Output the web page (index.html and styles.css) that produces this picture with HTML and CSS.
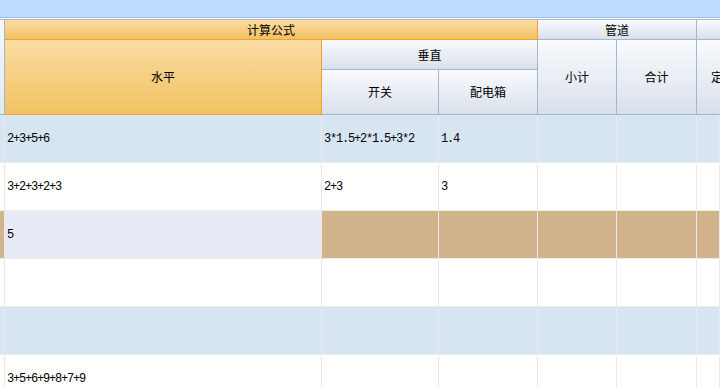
FILE: index.html
```html
<!DOCTYPE html>
<html lang="zh">
<head>
<meta charset="utf-8">
<title>计算公式</title>
<link rel="stylesheet" href="styles.css">
</head>
<body>
<div class="topbar"></div>
<div class="sheet">
  <div class="hd strip"></div>
  <div class="hd orange calc">计算公式</div>
  <div class="hd gray pipe">管道</div>
  <div class="hd gray extra"></div>
  <div class="hd orange horiz">水平</div>
  <div class="hd gray vert">垂直</div>
  <div class="hd gray sub">小计</div>
  <div class="hd gray tot">合计</div>
  <div class="hd gray quota">定额</div>
  <div class="hd gray sw">开关</div>
  <div class="hd gray box">配电箱</div>

  <div class="c s blue"></div><div class="c blue">2+3+5+6</div><div class="c blue">3*1.5+2*1.5+3*2</div><div class="c blue">1.4</div><div class="c blue"></div><div class="c blue"></div><div class="c blue"></div>
  <div class="c s"></div><div class="c">3+2+3+2+3</div><div class="c">2+3</div><div class="c">3</div><div class="c"></div><div class="c"></div><div class="c"></div>
  <div class="c s tan"></div><div class="c lav">5</div><div class="c tan"></div><div class="c tan"></div><div class="c tan"></div><div class="c tan"></div><div class="c tan"></div>
  <div class="c s"></div><div class="c"></div><div class="c"></div><div class="c"></div><div class="c"></div><div class="c"></div><div class="c"></div>
  <div class="c s blue"></div><div class="c blue"></div><div class="c blue"></div><div class="c blue"></div><div class="c blue"></div><div class="c blue"></div><div class="c blue"></div>
  <div class="c s"></div><div class="c">3+5+6+9+8+7+9</div><div class="c"></div><div class="c"></div><div class="c"></div><div class="c"></div><div class="c"></div>
</div>
</body>
</html>
```
FILE: styles.css
```css
html, body {
  margin: 0;
  padding: 0;
  background: #ffffff;
  overflow: hidden;
  width: 720px;
  height: 387px;
}
* { box-sizing: border-box; }

.topbar {
  height: 18px;
  background: #bfdbfd;
  border-bottom: 1px solid #9ebde3;
}

.sheet {
  margin-top: 1px;
  border-top: 1px solid #aab7c6;
  display: grid;
  grid-template-columns: 5px 317px 117px 99px 79px 80px 23px;
  grid-template-rows: 20px 30px 45px repeat(6, 48px);
  width: 720px;
  overflow: hidden;
  font-family: "Noto Sans CJK SC", "Liberation Sans", sans-serif;
  font-size: 12px;
  color: #000;
}

.hd {
  display: flex;
  align-items: center;
  justify-content: center;
  border-right: 1px solid #9fb8d3;
  border-bottom: 1px solid #9fb8d3;
  white-space: nowrap;
  overflow: hidden;
  line-height: 1;
}
.gray { background: linear-gradient(#f8fafd, #dae0eb); }
.orange {
  background: linear-gradient(#fadca3, #f2c262);
  border-color: #f2a034;
}
.strip {
  grid-column: 1;
  grid-row: 1 / 4;
  background: linear-gradient(#f6f9fd, #e3e9f2);
}
.calc { grid-column: 2 / 5; grid-row: 1; }
.pipe { grid-column: 5 / 7; grid-row: 1; }
.extra { grid-column: 7; grid-row: 1; border-right: 0; }
.horiz { grid-column: 2; grid-row: 2 / 4; }
.vert { grid-column: 3 / 5; grid-row: 2; }
.sub { grid-column: 5; grid-row: 2 / 4; }
.tot { grid-column: 6; grid-row: 2 / 4; }
.quota {
  grid-column: 7;
  grid-row: 2 / 4;
  justify-content: flex-start;
  padding-left: 14px;
  border-right: 0;
}
.sw { grid-column: 3; grid-row: 3; }
.box { grid-column: 4; grid-row: 3; }

.c {
  display: flex;
  align-items: center;
  padding-left: 2px;
  border-right: 1px solid #e9e9ea;
  border-bottom: 1px solid #ececec;
  background: #ffffff;
  font-family: "Liberation Mono", monospace;
  font-size: 12px;
  letter-spacing: -1.2px;
  white-space: nowrap;
  overflow: hidden;
}
.c.blue { background: #d7e4f2; }
.c.tan { background: #d2b48c; }
.c.lav { background: #e8eaf5; }
.c.s { padding: 0; }
```
